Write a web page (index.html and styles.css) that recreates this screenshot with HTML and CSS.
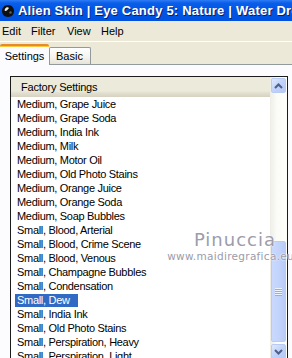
FILE: index.html
```html
<!DOCTYPE html>
<html>
<head>
<meta charset="utf-8">
<link rel="stylesheet" href="styles.css">
</head>
<body>
<div class="window">
  <div class="titlebar">
    <svg class="appicon" width="14" height="14" viewBox="0 0 14 14">
      <path d="M7 1 C11 1 13 4 13 7 C13 10 11 13 7 13 C3 13 1 10 1 7 C1 4 3 1 7 1Z" fill="#101010"/>
      <path d="M4 5 C5 3 7 3 8 4 C7 5 6 7 4 7 C3.5 6.5 3.6 5.6 4 5Z" fill="#f0f0f0"/>
      <circle cx="9.5" cy="8.5" r="1.2" fill="#606060"/>
    </svg>
    <span class="title">Alien Skin | Eye Candy 5: Nature | Water Drops</span>
  </div>
  <div class="menubar">
    <span class="menu m1">Edit</span>
    <span class="menu m2">Filter</span>
    <span class="menu m3">View</span>
    <span class="menu">Help</span>
  </div>
  <div class="tabrow">
    <div class="tab active">Settings</div>
    <div class="tab">Basic</div>
  </div>
  <div class="panel">
    <div class="listbox">
      <div class="listmain">
        <div class="header">Factory Settings</div>
        <div class="items">
          <div class="item"><span>Medium, Grape Juice</span></div>
          <div class="item"><span>Medium, Grape Soda</span></div>
          <div class="item"><span>Medium, India Ink</span></div>
          <div class="item"><span>Medium, Milk</span></div>
          <div class="item"><span>Medium, Motor Oil</span></div>
          <div class="item"><span>Medium, Old Photo Stains</span></div>
          <div class="item"><span>Medium, Orange Juice</span></div>
          <div class="item"><span>Medium, Orange Soda</span></div>
          <div class="item"><span>Medium, Soap Bubbles</span></div>
          <div class="item"><span>Small, Blood, Arterial</span></div>
          <div class="item"><span>Small, Blood, Crime Scene</span></div>
          <div class="item"><span>Small, Blood, Venous</span></div>
          <div class="item"><span>Small, Champagne Bubbles</span></div>
          <div class="item"><span>Small, Condensation</span></div>
          <div class="item selected"><span>Small, Dew</span></div>
          <div class="item"><span>Small, India Ink</span></div>
          <div class="item"><span>Small, Old Photo Stains</span></div>
          <div class="item"><span>Small, Perspiration, Heavy</span></div>
          <div class="item"><span>Small, Perspiration, Light</span></div>
        </div>
      </div>
      <div class="scrollbar">
        <div class="sbtn">
          <svg width="9" height="6" viewBox="0 0 9 6"><path d="M1 5 L4.5 1.5 L8 5" fill="none" stroke="#4d6185" stroke-width="2"/></svg>
        </div>
        <div class="track-top"></div>
        <div class="thumb">
          <div class="grip"><i></i><i></i><i></i><i></i></div>
        </div>
        <div class="sbtn down">
          <svg width="9" height="6" viewBox="0 0 9 6"><path d="M1 1 L4.5 4.5 L8 1" fill="none" stroke="#4d6185" stroke-width="2"/></svg>
        </div>
      </div>
    </div>
    <div class="watermark">
      <div class="wm-name">Pinuccia</div>
      <div class="wm-url">www.maidiregrafica.eu</div>
    </div>
  </div>
</div>
</body>
</html>
```
FILE: styles.css
```css
html, body {
  margin: 0;
  padding: 0;
}
body {
  width: 292px;
  height: 358px;
  overflow: hidden;
  background: #ece9d8;
  font-family: "Liberation Sans", Arial, sans-serif;
}
.window {
  display: flex;
  flex-direction: column;
  width: 292px;
  height: 358px;
}
.titlebar {
  height: 21px;
  display: flex;
  align-items: center;
  gap: 3px;
  padding-left: 1px;
  white-space: nowrap;
  overflow: hidden;
  background: linear-gradient(#2f7cf4 0, #0a5ee8 3px, #0055e6 10px, #0052df 100%);
  flex: none;
}
.appicon {
  flex: none;
}
.title {
  color: #fff;
  font-weight: bold;
  font-size: 13px;
  letter-spacing: 0.2px;
  text-shadow: 1px 1px 0 #0a1e6e;
}
.menubar {
  height: 20px;
  display: flex;
  align-items: center;
  padding-left: 2px;
  font-size: 11px;
  color: #000;
  border-bottom: 1px solid #fff;
  flex: none;
}
.menu {
  display: block;
}
.m1 { width: 29px; }
.m2 { width: 36px; }
.m3 { width: 34px; }
.tabrow {
  height: 22px;
  display: flex;
  align-items: flex-end;
  font-size: 11px;
  border-bottom: 1px solid #919b9c;
  flex: none;
}
.tab {
  height: 16px;
  padding: 0 7px 0 6px;
  display: flex;
  align-items: center;
  border: 1px solid #919b9c;
  border-bottom: none;
  border-radius: 2px 2px 0 0;
  background: linear-gradient(#ffffff, #f3f2ec 60%, #e6e4d8);
}
.tab.active {
  height: 19px;
  padding: 0 5px;
  margin-bottom: -1px;
  background: #fcfcfe;
  border-top: 2px solid #e68b2c;
  box-shadow: inset 0 1px 0 #ffc73c;
  width: 39px;
  justify-content: center;
  border-right: none;
  border-left: none;
}
.panel {
  position: relative;
  flex: 1;
  background: #fcfcfe;
  padding: 11px 4px 0 10px;
  overflow: hidden;
}
.listbox {
  display: flex;
  border: 1px solid #1c1c1c;
  border-bottom: none;
  background: #fff;
  height: 300px;
}
.listmain {
  flex: 1;
  display: flex;
  flex-direction: column;
}
.header {
  height: 20px;
  display: flex;
  align-items: center;
  padding-left: 10px;
  font-size: 11px;
  color: #000;
  background: linear-gradient(#ebeadb 0, #ebeadb 70%, #e2dfcf 80%, #d6d2c2 100%);
  letter-spacing: -0.2px;
}
.items {
  display: flex;
  flex-direction: column;
}
.item {
  height: 14px;
  display: flex;
  align-items: center;
  padding-left: 4px;
  font-size: 11px;
  letter-spacing: -0.3px;
  color: #000;
  white-space: nowrap;
}
.item span {
  padding: 0 2px;
  line-height: 13px;
}
.item.selected span {
  background: #316ac5;
  color: #fff;
  padding-right: 8px;
}
.scrollbar {
  width: 17px;
  flex: none;
  display: flex;
  flex-direction: column;
  align-items: center;
  background: linear-gradient(90deg, #eeede5, #fbfbf8 40%, #fdfdfa);
}
.sbtn {
  width: 15px;
  height: 15px;
  margin-top: 1px;
  box-sizing: border-box;
  border: 1px solid #b8cbf4;
  border-radius: 2px;
  background: linear-gradient(135deg, #e0e9fd, #c1d3fb 50%, #b4c8f6);
  display: flex;
  align-items: center;
  justify-content: center;
  flex: none;
}
.sbtn.down {
  margin-top: 2px;
}
.track-top {
  height: 148px;
  flex: none;
}
.thumb {
  width: 15px;
  height: 101px;
  box-sizing: border-box;
  border: 1px solid #b8cbf4;
  border-radius: 2px;
  background: linear-gradient(90deg, #c9d8fc, #c3d4fc 50%, #b8cbf6);
  display: flex;
  align-items: center;
  justify-content: center;
  flex: none;
}
.grip {
  display: flex;
  flex-direction: column;
  gap: 1px;
}
.grip i {
  display: block;
  width: 7px;
  height: 1px;
  background: #eef4fe;
  box-shadow: 0 1px 0 #8cb0f8;
}
.watermark {
  position: absolute;
  left: 166px;
  top: 167px;
  width: 126px;
  display: flex;
  flex-direction: column;
  align-items: flex-end;
  gap: 2px;
  color: #9c9cab;
  font-family: "DejaVu Sans", sans-serif;
  text-shadow: 0 0 2px #fff, 0 0 1px #fff;
  pointer-events: none;
}
.wm-name {
  font-size: 18px;
  line-height: 16px;
  letter-spacing: 1px;
  padding-right: 16px;
}
.wm-url {
  font-size: 10.5px;
  line-height: 12px;
  letter-spacing: 0.3px;
  margin-right: -2px;
}
```
